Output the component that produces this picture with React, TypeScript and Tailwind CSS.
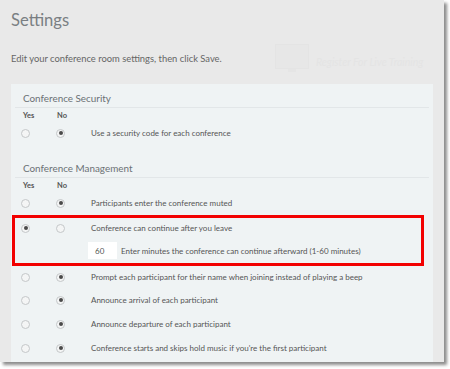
import React from "react";

const font = { fontFamily: "Lato, 'Liberation Sans', sans-serif" };

function Radio({ checked }: { checked?: boolean }) {
  return (
    <div className="w-[9px] h-[9px] rounded-full border border-[#c4c7c9] bg-[#f4f5f5] flex items-center justify-center">
      {checked && <div className="w-[4px] h-[4px] rounded-full bg-[#4a4a4a]" />}
    </div>
  );
}

function Row({ yes, label, h = "h-[24px]" }: { yes: boolean; label: string; h?: string }) {
  return (
    <div className={`flex items-center ${h}`}>
      <div className="w-[34px] pl-[10px]"><Radio checked={yes} /></div>
      <div className="w-[34px] pl-[11px]"><Radio checked={!yes} /></div>
      <div className="text-[8px] text-[#555] pl-[12px]">{label}</div>
    </div>
  );
}

function Header({ title }: { title: string }) {
  return (
    <div className="mx-[4px] h-[24px] border-b border-[#e2e6e8] flex items-end pb-[2px] pl-[8px]">
      <span className="text-[9.9px] text-[#6b7175] leading-[14px]">{title}</span>
    </div>
  );
}

function YesNo() {
  return (
    <div className="flex items-center h-[16px] text-[7.5px] font-bold text-[#555]">
      <div className="w-[34px] pl-[12px]">Yes</div>
      <div className="w-[34px] pl-[12px]">No</div>
    </div>
  );
}

export default function App() {
  return (
    <div className="w-[450px] h-[369px] bg-white" style={font}>
      <div className="w-[444px] h-[362px] bg-[#e9e9e9] overflow-hidden shadow-[3px_3px_3px_rgba(0,0,0,0.45)] flex flex-col">
        <div className="relative h-[84px] pl-[11px]">
          <div className="pt-[8px] text-[16.6px] text-[#7a7f83] leading-[24px]">Settings</div>
          <div className="pt-[20px] text-[9.4px] text-[#666] leading-[14px]">
            Edit your conference room settings, then click Save.
          </div>
          <div className="absolute left-[275px] top-[44px] flex items-end gap-[7px]">
            <div className="flex flex-col items-center">
              <div className="w-[34px] h-[25px] border border-[#e4e4e4] bg-[#e7e7e7]" />
              <div className="w-[8px] h-[3px] bg-[#e5e5e5]" />
            </div>
            <div className="text-[10.5px] italic text-[#e4e4e4] leading-[14px] pb-[3px]">Register For Live Training</div>
          </div>
        </div>
        <div className="ml-[11px] w-[422px] flex-1 bg-[#eff3f4] flex flex-col">
          <Header title="Conference Security" />
          <YesNo />
          <Row yes={false} label="Use a security code for each conference" h="h-[18px]" />
          <div className="h-[12px]" />
          <Header title="Conference Management" />
          <YesNo />
          <Row yes={false} label="Participants enter the conference muted" h="h-[18px]" />
          <div className="h-[3px]" />
          <div className="ml-[1px] w-[412px] h-[51px] border-[3px] border-[#f20000] flex flex-col">
            <div className="flex items-center h-[20px] -ml-[4px]">
              <div className="w-[34px] pl-[10px]"><Radio checked /></div>
              <div className="w-[34px] pl-[11px]"><Radio /></div>
              <div className="text-[8px] text-[#555] pl-[12px]">Conference can continue after you leave</div>
            </div>
            <div className="flex items-center h-[25px] pl-[73px]">
              <div className="w-[29px] h-[17px] bg-white text-[8px] text-[#555] flex items-center pl-[7px]">60</div>
              <div className="text-[8px] text-[#555] pl-[4px]">Enter minutes the conference can continue afterward (1-60 minutes)</div>
            </div>
          </div>
          <Row yes={false} label="Prompt each participant for their name when joining instead of playing a beep" h="h-[22px]" />
          <Row yes={false} label="Announce arrival of each participant" />
          <Row yes={false} label="Announce departure of each participant" />
          <Row yes={false} label="Conference starts and skips hold music if you're the first participant" />
        </div>
      </div>
    </div>
  );
}
